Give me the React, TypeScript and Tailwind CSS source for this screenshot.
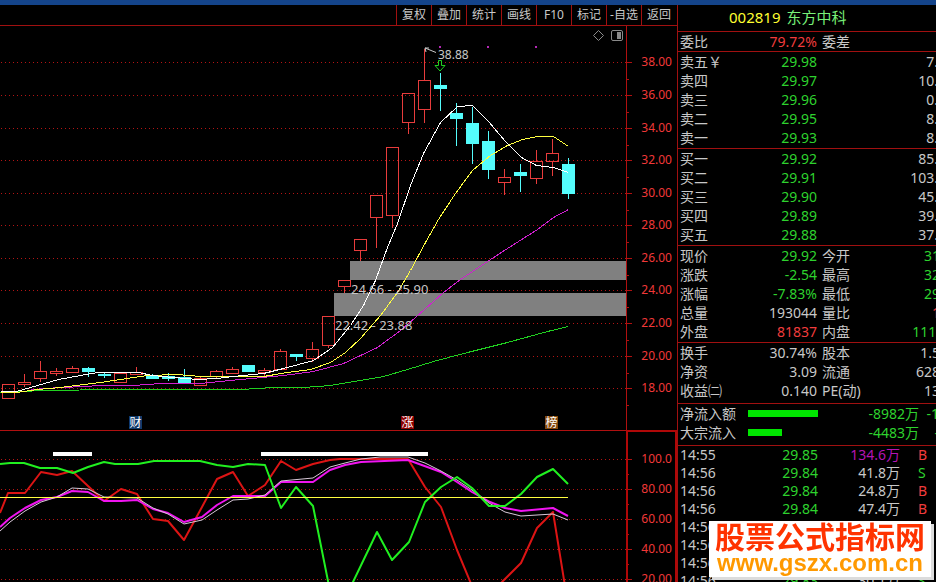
import React from "react";

type Tone = "green" | "red" | "gray" | "purple";

const toneClass: Record<Tone, string> = {
  green: "text-[#2ed22e]",
  red: "text-[#f03c3c]",
  gray: "text-[#c8c8c8]",
  purple: "text-[#b414b4]",
};

const tools = ["复权", "叠加", "统计", "画线", "F10", "标记", "-自选", "返回"];

interface QuoteRow {
  label: string;
  value: string;
  tone: Tone;
  label2?: string;
  value2?: string;
  tone2?: Tone;
}

const ratio: QuoteRow[] = [{ label: "委比", value: "79.72%", tone: "red", label2: "委差" }];

const sells: QuoteRow[] = [
  { label: "卖五￥", value: "29.98", tone: "green", value2: "7." },
  { label: "卖四", value: "29.97", tone: "green", value2: "10." },
  { label: "卖三", value: "29.96", tone: "green", value2: "0." },
  { label: "卖二", value: "29.95", tone: "green", value2: "8." },
  { label: "卖一", value: "29.93", tone: "green", value2: "8." },
];

const buys: QuoteRow[] = [
  { label: "买一", value: "29.92", tone: "green", value2: "85." },
  { label: "买二", value: "29.91", tone: "green", value2: "103." },
  { label: "买三", value: "29.90", tone: "green", value2: "45." },
  { label: "买四", value: "29.89", tone: "green", value2: "39." },
  { label: "买五", value: "29.88", tone: "green", value2: "37." },
];

const stats: QuoteRow[] = [
  { label: "现价", value: "29.92", tone: "green", label2: "今开", value2: "31", tone2: "green" },
  { label: "涨跌", value: "-2.54", tone: "green", label2: "最高", value2: "32", tone2: "green" },
  { label: "涨幅", value: "-7.83%", tone: "green", label2: "最低", value2: "29", tone2: "green" },
  { label: "总量", value: "193044", tone: "gray", label2: "量比", value2: "1", tone2: "red" },
  { label: "外盘", value: "81837", tone: "red", label2: "内盘", value2: "111.", tone2: "green" },
];

const fundamentals: QuoteRow[] = [
  { label: "换手", value: "30.74%", tone: "gray", label2: "股本", value2: "1.5" },
  { label: "净资", value: "3.09", tone: "gray", label2: "流通", value2: "628" },
  { label: "收益㈡", value: "0.140", tone: "gray", label2: "PE(动)", value2: "13" },
];

const flows = [
  { label: "净流入额", share: 100, value: "-8982万", next: "-1" },
  { label: "大宗流入", share: 49, value: "-4483万", next: "-" },
];

const ticks: { time: string; price: string; volume: string; tone: Tone; side: string }[] = [
  { time: "14:55", price: "29.85", volume: "134.6万", tone: "purple", side: "B" },
  { time: "14:56", price: "29.84", volume: "41.8万", tone: "gray", side: "S" },
  { time: "14:56", price: "29.84", volume: "24.8万", tone: "gray", side: "B" },
  { time: "14:56", price: "29.84", volume: "47.4万", tone: "gray", side: "B" },
  { time: "14:56", price: "", volume: "", tone: "gray", side: "" },
  { time: "14:56", price: "", volume: "", tone: "gray", side: "" },
  { time: "14:56", price: "", volume: "", tone: "gray", side: "" },
  { time: "14:56", price: "29.83", volume: "30.1万", tone: "gray", side: "S" },
];

/* [centre x, wick top, body top, body bottom, wick bottom, rising] */
const candles: [number, number, number, number, number, boolean][] = [
  [8, 384, 384, 398, 398, true],
  [24, 374, 382, 384, 386, true],
  [40, 361, 371, 378, 381, true],
  [56, 368, 371, 373, 375, true],
  [72, 366, 368, 372, 372, true],
  [88, 367, 368, 372, 377, false],
  [104, 372, 374, 376, 378, false],
  [120, 373, 373, 382, 382, true],
  [136, 367, 372, 374, 374, true],
  [152, 374, 375, 379, 379, false],
  [168, 373, 376, 379, 381, false],
  [184, 369, 377, 383, 384, false],
  [200, 376, 378, 385, 385, true],
  [216, 370, 371, 376, 377, true],
  [232, 367, 369, 373, 373, true],
  [248, 365, 365, 372, 372, false],
  [264, 368, 370, 372, 376, true],
  [280, 349, 351, 369, 369, true],
  [296, 354, 354, 357, 361, false],
  [312, 342, 349, 358, 361, true],
  [328, 316, 316, 345, 347, true],
  [344, 280, 280, 286, 292, true],
  [360, 239, 239, 250, 260, true],
  [376, 195, 195, 217, 247, true],
  [392, 147, 147, 215, 227, true],
  [408, 93, 93, 122, 133, true],
  [424, 49, 80, 109, 122, true],
  [440, 73, 85, 89, 111, false],
  [456, 103, 113, 119, 146, false],
  [472, 107, 123, 144, 164, false],
  [488, 131, 141, 170, 179, false],
  [504, 169, 177, 182, 194, true],
  [520, 164, 172, 176, 192, false],
  [536, 150, 161, 178, 183, true],
  [552, 139, 153, 161, 175, true],
  [568, 158, 164, 194, 199, false],
];

const averages = [
  { color: "#20d020", points: "0,392 17,391 47,390 113,389 240,389 273,387 303,387 330,385 360,380 383,376 407,369 433,361 467,352 507,342 547,331 568,326" },
  { color: "#d020d0", points: "27,390 43,388 83,386 100,385 133,385 160,383 200,383 240,379 283,375 313,371 343,363 377,347 400,330 415,317 443,292 460,279 472,271 487,261 507,248 537,229 553,217 568,209" },
  { color: "#ffff40", points: "0,392 16,392 37,389 60,387 100,382 133,377 147,375 177,374 200,376 263,376 287,372 310,369 330,362 345,352 360,338 380,315 397,292 410,270 425,242 438,219 455,193 472,170 490,155 507,145 522,139 537,136 553,136 568,146" },
  { color: "#ffffff", points: "0,391 16,391 37,385 58,379 80,375 97,372 138,372 152,375 173,377 197,379 217,378 233,376 263,373 283,368 313,360 332,347 350,325 363,305 375,280 387,247 397,223 410,185 423,153 440,122 457,106 472,105 488,121 505,141 521,157 536,165 553,167 568,172" },
];

const priceLevels: [number, string][] = [
  [62, "38.00"], [95, "36.00"], [128, "34.00"], [160, "32.00"], [193, "30.00"], [225, "28.00"],
  [258, "26.00"], [290, "24.00"], [323, "22.00"], [356, "20.00"], [388, "18.00"],
];

const oscLevels: [number, string][] = [
  [459, "100.0"], [489, "80.00"], [519, "60.00"], [549, "40.00"], [579, "20.00"],
];

const badges: [number, string, string][] = [
  [129, "财", "#103a6a"],
  [401, "涨", "#8c0000"],
  [545, "榜", "#84480c"],
];

function Levels({ levels, half }: { levels: [number, string][]; half: number }) {
  return (
    <>
      {levels.map(([y, label]) => (
        <g key={label}>
          <line x1="1" x2="626" y1={y + 0.5} y2={y + 0.5} stroke="#b41414" strokeDasharray="1 3" />
          <path d={`M627 ${y + 0.5}h5M627 ${y + half + 0.5}h2`} stroke="#b01010" />
          <text x="672" y={y + 4} textAnchor="end" fontSize="12" fill="#f03838">{label}</text>
        </g>
      ))}
    </>
  );
}

function PriceChart() {
  return (
    <svg viewBox="0 26 677 404" className="block h-auto w-full" role="img" aria-label="K线图">
      <g shapeRendering="crispEdges">
        <Levels levels={priceLevels} half={17} />
        <path d="M626.5 26V430" stroke="#b01010" />
        <rect x="350" y="261" width="276" height="19" fill="#808080" />
        <rect x="334" y="293" width="292" height="23" fill="#808080" />
        {candles.map(([x, high, top, bottom, low, rising]) =>
          rising ? (
            <g key={x} stroke="#e83c3c" fill="none">
              <path d={`M${x + 0.5} ${high}V${top}M${x + 0.5} ${bottom}V${low + 1}`} />
              <rect x={x - 5.5} y={top + 0.5} width="12" height={bottom - top} />
            </g>
          ) : (
            <g key={x} fill="#54fcfc">
              <rect x={x} y={high} width="1" height={low - high} />
              <rect x={x - 6} y={top} width="13" height={bottom - top} />
            </g>
          )
        )}
        <g transform="translate(0.5 0.5)">
          {averages.map((a) => (
            <polyline key={a.color} points={a.points} fill="none" stroke={a.color} />
          ))}
        </g>
        {[439, 487, 535].map((x) => (
          <rect key={x} x={x} y="46" width="2" height="2" fill="#b428b4" />
        ))}
      </g>
      <path d="M425 48l11 4.500M425 48h4M425 48l1 4" stroke="#c8c8c8" fill="none" />
      <path d="M438.500 60.500h3v5h3.500l-5 5.500-5-5.500h3.500z" stroke="#20d020" fill="none" />
      <path d="M598.500 30.500l5 5-5 5-5-5z" stroke="#8a8a8a" fill="none" />
      <rect x="611.500" y="30.500" width="11" height="10" rx="1.500" stroke="#8a8a8a" fill="none" />
      <rect x="617" y="32" width="4" height="7" fill="#8a8a8a" />
      <g fill="#c8c8c8">
        <text x="438" y="59" fontSize="12">38.88</text>
        <text x="351" y="294" fontSize="13">24.66 - 25.90</text>
        <text x="335" y="330" fontSize="13">22.42 - 23.88</text>
      </g>
      {badges.map(([x, label, color]) => (
        <g key={label}>
          <rect x={x} y="416" width="13" height="13" fill={color} />
          <text x={x + 6.5} y="427" textAnchor="middle" fontSize="12" fill="#ffffff">{label}</text>
        </g>
      ))}
    </svg>
  );
}

function Oscillator() {
  return (
    <svg viewBox="0 430 677 152" className="block h-auto w-full" role="img" aria-label="指标图">
      <g shapeRendering="crispEdges">
        <Levels levels={oscLevels} half={15} />
        <path d="M0 430.500H627" stroke="#b01010" />
        <path d="M676 582V431H627V582" stroke="#b00808" strokeWidth="2" fill="none" />
        <rect x="53" y="452" width="39" height="4" fill="#ffffff" />
        <rect x="261" y="452" width="167" height="4" fill="#ffffff" />
      </g>
      <g fill="none" strokeLinejoin="round">
        <polyline stroke="#dc1414" strokeWidth="2" points="0,513 8,493 25,493 41,472 57,475 72,471 104,501 121,489 137,494 153,519 168,521 184,540 202,507 217,479 233,472 248,496 265,485 281,461 296,470 313,464 330,460 340,459 408,459 425,487 441,507 457,550 472,586" />
        <polyline stroke="#dc1414" strokeWidth="2" points="499,586 502,582 521,563 537,528 553,512 565,586" />
        <polyline stroke="#f014f0" strokeWidth="2" points="0,527 10,518 25,508 41,500 57,497 72,491 88,492 104,501 121,501 137,500 153,509 168,513 184,522 202,517 217,505 233,496 265,496 281,482 313,482 330,470 345,465 361,462 408,460 441,472 457,482 472,492 490,502 505,508 521,511 553,508 568,516" />
        <polyline stroke="#d8c8d8" points="0,531 10,522 25,511 41,502 57,497 72,488 88,489 104,497 137,498 153,508 168,514 184,524 202,520 217,510 233,500 248,499 265,495 281,481 313,478 330,467 345,463 361,459 380,457 408,457 425,463 441,471 457,480 472,490 489,503 505,512 521,516 553,514 568,520" />
        <polyline stroke="#20f020" strokeWidth="2" points="0,464 10,463 24,463 40,468 57,468 73,473 88,467 104,462 115,464 138,464 154,461 200,461 217,465 233,467 248,464 265,465 281,508 296,487 313,506 329,586" />
        <polyline stroke="#20f020" strokeWidth="2" points="351,586 353,582 377,532 392,560 409,542 425,502 441,487 457,477 472,488 489,506 505,506 521,494 537,477 553,469 568,484" />
        <path d="M0 497.500H568" stroke="#ffff40" />
      </g>
    </svg>
  );
}

function QuoteTable({ rows, spill }: { rows: QuoteRow[]; spill: string }) {
  return (
    <div className={`border-b border-[#a01010] pl-0.5 ${spill}`}>
      <table className="w-full table-fixed border-collapse">
        <colgroup>
          <col className="w-14" />
          <col className="w-[81px]" />
          <col className="w-14" />
          <col />
        </colgroup>
        <tbody>
          {rows.map((r) => (
            <tr key={r.label} className="h-[19px]">
              <th scope="row" className="p-0 text-left font-normal whitespace-nowrap">{r.label}</th>
              <td className={`p-0 text-right ${toneClass[r.tone]}`}>{r.value}</td>
              <th scope="row" className="p-0 pl-[5px] text-left font-normal whitespace-nowrap">{r.label2}</th>
              <td className={`p-0 text-right ${toneClass[r.tone2 ?? "gray"]}`}>{r.value2}</td>
            </tr>
          ))}
        </tbody>
      </table>
    </div>
  );
}

export default function App() {
  return (
    <div className="flex h-screen flex-col overflow-hidden bg-black font-['Noto_Sans','Noto_Sans_CJK_SC',sans-serif] text-[#c8c8c8]">
      <div className="h-[5px] shrink-0 bg-[#14448a]" />
      <div className="flex min-h-0 flex-1">
        <main className="min-w-0 flex-1">
          <nav className="flex h-[21px] justify-end border-b border-[#a01010] pr-px">
            {tools.map((t) => (
              <button
                key={t}
                type="button"
                className="w-[35px] border-l border-[#a01010] text-xs leading-5 whitespace-nowrap"
              >
                {t}
              </button>
            ))}
          </nav>
          <PriceChart />
          <Oscillator />
        </main>

        <aside className="w-[259px] shrink-0 overflow-hidden border-l border-[#a01010] text-sm leading-[19px]">
          <h1 className="flex h-[27px] items-center gap-1.5 border-b border-[#a01010] pb-0.5 pl-[51px] text-[15px] whitespace-nowrap">
            <span className="text-[#ffff30]">002819</span>
            <span className="text-[#78f078]">东方中科</span>
          </h1>
          <QuoteTable rows={ratio} spill="-mr-1" />
          <QuoteTable rows={sells} spill="-mr-0.5 pb-px" />
          <QuoteTable rows={buys} spill="-mr-0.5 pb-px" />
          <QuoteTable rows={stats} spill="-mr-1 pb-px" />
          <QuoteTable rows={fundamentals} spill="-mr-1 pb-[3px]" />

          <div className="border-b border-[#a01010] pb-[3px] pl-0.5">
            {flows.map((f) => (
              <div key={f.label} className="flex h-[19px] items-center whitespace-nowrap">
                <span className="w-[68px] shrink-0">{f.label}</span>
                <div className="w-[70px] shrink-0">
                  <div className="h-[7px] bg-[#00e600]" style={{ width: `${f.share}%` }} />
                </div>
                <span className={`w-[101px] shrink-0 text-right ${toneClass.green}`}>{f.value}</span>
                <span className={`ml-1 w-4 shrink-0 text-right ${toneClass.green}`}>{f.next}</span>
              </div>
            ))}
          </div>

          <div className="pl-0.5">
            <table className="w-full table-fixed border-collapse leading-[18px]">
              <colgroup>
                <col className="w-14" />
                <col className="w-[82px]" />
                <col className="w-[82px]" />
                <col />
              </colgroup>
              <tbody>
                {ticks.map((t, i) => (
                  <tr key={i} className="h-[18px]">
                    <td className="p-0">{t.time}</td>
                    <td className={`p-0 text-right ${toneClass.green}`}>{t.price}</td>
                    <td className={`p-0 text-right ${toneClass[t.tone]}`}>{t.volume}</td>
                    <td className={`p-0 pl-[18px] ${toneClass[t.side === "B" ? "red" : "green"]}`}>{t.side}</td>
                  </tr>
                ))}
              </tbody>
            </table>
          </div>
        </aside>
      </div>

      <div className="fixed right-[5px] bottom-[5px] flex h-14 w-[222px] flex-col items-center bg-white font-bold whitespace-nowrap shadow-[3px_3px_0_#dcdcdc]">
        <span className="text-[30px] leading-8 text-[#ff3300]">股票公式指标网</span>
        <a href="#home" className="font-['Liberation_Sans',sans-serif] text-2xl leading-5 text-[#ff9900]">
          www.gszx.com.cn
        </a>
      </div>
    </div>
  );
}
